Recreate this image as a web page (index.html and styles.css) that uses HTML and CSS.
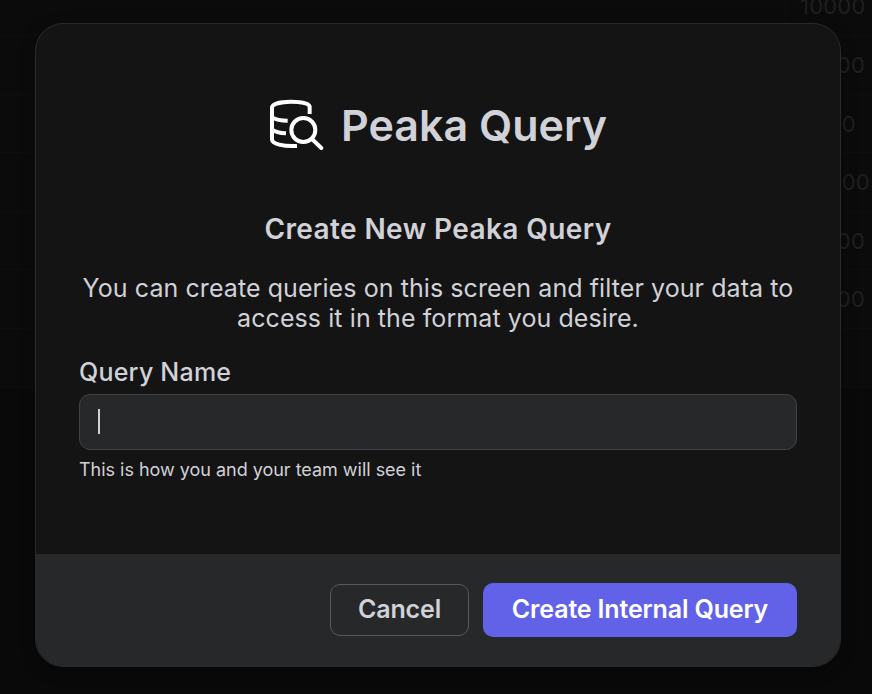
FILE: index.html
```html
<!DOCTYPE html>
<html lang="en">
<head>
<meta charset="utf-8">
<title>Peaka Query</title>
<link rel="stylesheet" href="styles.css">
</head>
<body>
<div class="table">
  <div class="row first"><span class="cell">10000</span></div>
  <div class="row"><span class="cell">15000</span></div>
  <div class="row"><span class="cell">5000</span></div>
  <div class="row"><span class="cell">20000</span></div>
  <div class="row"><span class="cell">15000</span></div>
  <div class="row"><span class="cell">15000</span></div>
  <div class="row"></div>
</div>
<main class="modal">
  <div class="content">
    <header class="brand">
      <svg class="icon" viewBox="45 42 168 156" fill="none" stroke="#fff" stroke-width="12">
        <path d="M167 87V65C163 45 57 45 54 67V163C55 177 86 185 129 183"/>
        <path d="M54 97C65 104 80 107 101 107M54 134C63 141 75 144 96 145"/>
        <circle cx="148" cy="135" r="36"/>
        <path d="M175 163L202 189" stroke-linecap="round"/>
      </svg>
      <h1 class="title">Peaka Query</h1>
    </header>
    <h2 class="subtitle">Create New Peaka Query</h2>
    <p class="text">You can create queries on this screen and filter your data to<br>access it in the format you desire.</p>
    <div class="label">Query Name</div>
    <div class="input"><span class="caret"></span></div>
    <div class="hint">This is how you and your team will see it</div>
  </div>
  <footer class="footer">
    <button class="btn cancel">Cancel</button>
    <button class="btn create">Create Internal Query</button>
  </footer>
</main>
</body>
</html>
```
FILE: styles.css
```css
* { box-sizing: border-box; }
body {
  margin: 0;
  width: 872px;
  height: 694px;
  overflow: hidden;
  position: relative;
  background: #090909;
  color: #d1d1d8;
  font-family: Inter, "Liberation Sans", sans-serif;
  padding: 23px 31px 27px 35px;
}
.table {
  position: absolute;
  inset: 0;
  color: #1f1f20;
  font-size: 22px;
  letter-spacing: 0.2px;
}
.row {
  height: 58.6px;
  padding-left: 785px;
  background: #0b0b0b;
  border-bottom: 1px solid #0e0e0e;
}
.row.first { height: 36px; }
.cell {
  display: block;
  height: 100%;
  padding-left: 14px;
  border-left: 1px solid #0e0e0e;
  line-height: 58px;
}
.first .cell { line-height: 13px; }
.modal {
  position: relative;
  display: flex;
  flex-direction: column;
  width: 806px;
  height: 644px;
  border: 1px solid #2a2a2b;
  border-radius: 28px;
  background: #141414;
  overflow: hidden;
  box-shadow: 0 4px 16px #0004;
}
.content { flex: 1; padding: 69px 43px 0; }
.brand { display: flex; justify-content: center; align-items: center; gap: 16px; height: 64px; }
.icon { width: 56px; height: 52px; }
.title { margin: 0; font-size: 43px; font-weight: 600; line-height: 64px; white-space: nowrap; }
.subtitle { margin: 54px 0 0; font-size: 28px; font-weight: 600; line-height: 36px; text-align: center; letter-spacing: 0.4px; }
.text { margin: 26px 0 0; font-size: 25px; line-height: 30px; text-align: center; letter-spacing: 0.08px; white-space: nowrap; }
.label { margin-top: 23px; font-size: 25px; font-weight: 500; line-height: 32px; letter-spacing: 0.22px; }
.input {
  display: flex;
  align-items: center;
  height: 56px;
  margin-top: 6px;
  padding: 0 0 1px 18px;
  border: 1px solid #414244;
  border-radius: 11px;
  background: #27282a;
}
.caret { width: 2px; height: 25px; background: #d1d1d8; }
.hint { margin-top: 8px; font-size: 18px; line-height: 24px; letter-spacing: -0.02px; }
.footer {
  display: flex;
  justify-content: flex-end;
  align-items: center;
  gap: 14px;
  height: 113px;
  margin: 0 -1px -1px;
  padding: 0 44px 2px;
  background: #27282a;
}
.btn { padding: 0 0 2px; border-radius: 10px; font: 600 25px/32px Inter, sans-serif; letter-spacing: -0.15px; white-space: nowrap; }
.cancel { width: 139px; height: 52px; border: 1px solid #57585b; background: #27282a; color: #d1d1d8; }
.create { width: 314px; height: 54px; border: 0; background: #6162e8; color: #fff; }
```
